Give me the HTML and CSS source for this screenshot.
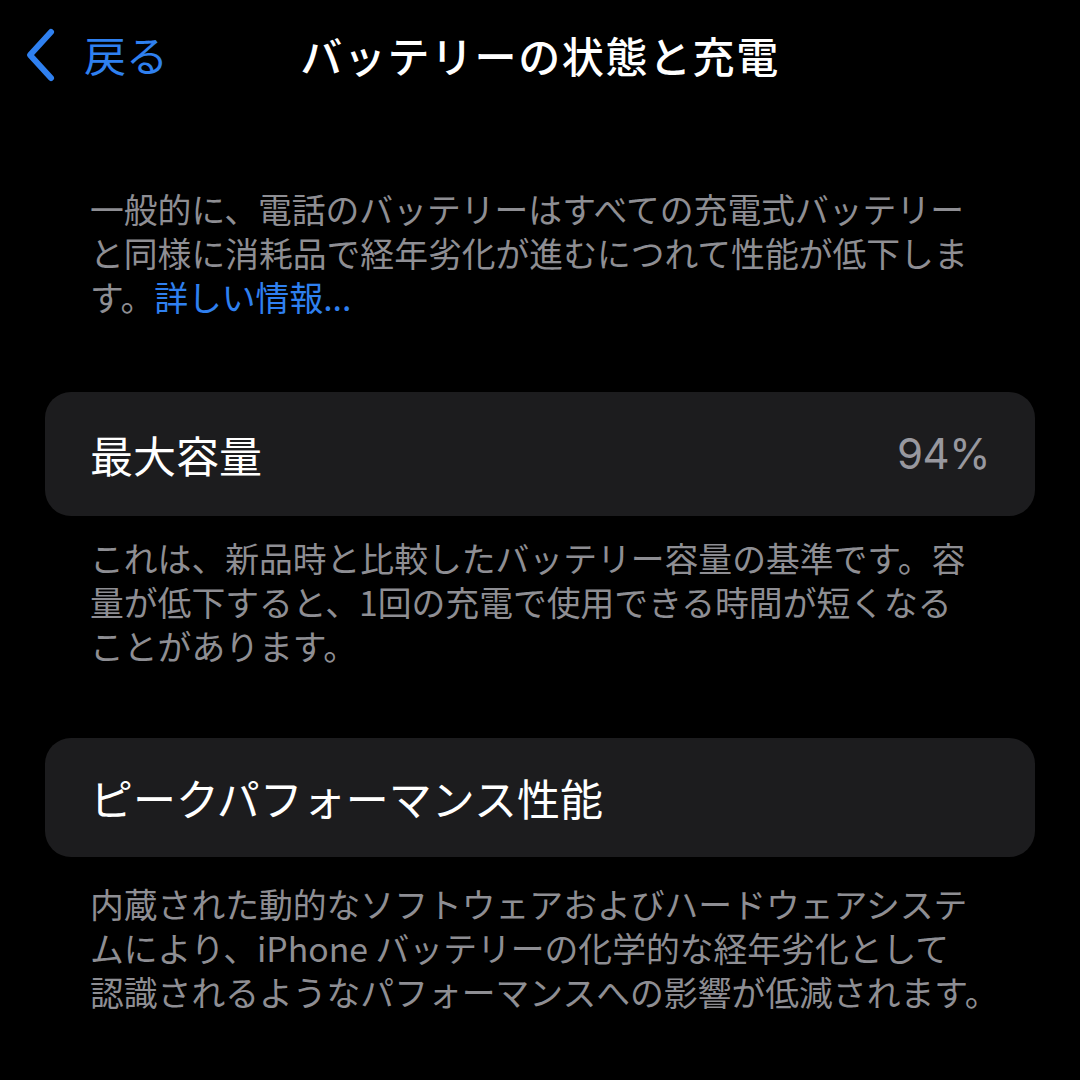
FILE: index.html
```html
<!DOCTYPE html>
<html lang="ja">
<head>
<meta charset="utf-8">
<link rel="stylesheet" href="styles.css">
</head>
<body>
<div class="screen">
  <header class="nav">
    <a class="back">
      <svg class="chevron" width="36" height="56" viewBox="0 0 36 56"><path d="M27 5 L6 28 L27 51" fill="none" stroke="#2f80f0" stroke-width="6" stroke-linecap="round" stroke-linejoin="round"/></svg>
      <span class="back-label">戻る</span>
    </a>
    <h1 class="title">バッテリーの状態と充電</h1>
    <div class="spacer"></div>
  </header>

  <p class="note intro">一般的に、電話のバッテリーはすべての充電式バッテリー<br>と同様に消耗品で経年劣化が進むにつれて性能が低下しま<br>す。<span class="link">詳しい情報...</span></p>

  <div class="card card-capacity">
    <span class="label">最大容量</span>
    <span class="value">94%</span>
  </div>
  <p class="note after-card1">これは、新品時と比較したバッテリー容量の基準です。容<br>量が低下すると、1回の充電で使用できる時間が短くなる<br>ことがあります。</p>

  <div class="card card-peak">
    <span class="label">ピークパフォーマンス性能</span>
  </div>
  <p class="note after-card2">内蔵された動的なソフトウェアおよびハードウェアシステ<br>ムにより、iPhone バッテリーの化学的な経年劣化として<br>認識されるようなパフォーマンスへの影響が低減されます。</p>
</div>
</body>
</html>
```

FILE: styles.css
```css
html, body {
  margin: 0;
  padding: 0;
  background: #000;
}
body {
  width: 1080px;
  height: 1080px;
  overflow: hidden;
  font-family: "Noto Sans CJK JP", "Noto Sans", sans-serif;
  color: #fff;
}
.screen {
  display: flex;
  flex-direction: column;
}
.nav {
  height: 110px;
  display: grid;
  grid-template-columns: 1fr auto 1fr;
  align-items: center;
}
.back {
  display: flex;
  align-items: center;
  padding-left: 24px;
  gap: 24px;
  color: #2f80f0;
}
.chevron {
  display: block;
}
.back-label {
  font-size: 42px;
  line-height: 1;
  position: relative;
  top: -1px;
}
.title {
  margin: 0;
  font-size: 42px;
  font-weight: 500;
  letter-spacing: 1.6px;
  line-height: 1;
  color: #fff;
}
.note {
  margin: 0;
  padding: 0 90px;
  font-size: 33.8px;
  line-height: 44px;
  color: #8e8e93;
  white-space: nowrap;
}
.intro {
  margin-top: 77px;
}
.link {
  color: #2f80f0;
}
.card {
  margin: 0 45px;
  background: #1c1c1e;
  border-radius: 26px;
  display: flex;
  align-items: center;
  justify-content: space-between;
  padding: 0 45px;
}
.card-capacity {
  margin-top: 73px;
  height: 124px;
}
.card-peak {
  margin-top: 70px;
  height: 119px;
}
.label {
  font-size: 43px;
  line-height: 1;
  color: #fff;
}
.value {
  font-family: Inter, "Noto Sans", sans-serif;
  font-size: 42px;
  line-height: 1;
  color: #98989f;
  letter-spacing: -0.5px;
}
.after-card1 {
  margin-top: 20px;
}
.after-card2 {
  margin-top: 25px;
}
```
